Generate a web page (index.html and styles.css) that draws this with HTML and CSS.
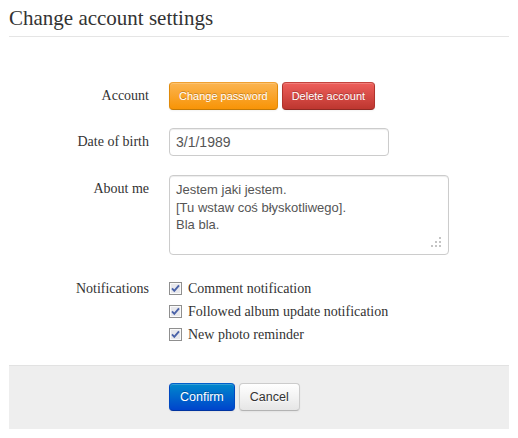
FILE: index.html
```html
<!DOCTYPE html>
<html>
<head>
<meta charset="utf-8">
<link rel="stylesheet" href="styles.css">
</head>
<body>
<div class="page">
  <h1 class="title">Change account settings</h1>
  <form class="form">
    <div class="row row-account">
      <div class="label">Account</div>
      <div class="controls btns">
        <button type="button" class="btn btn-sm btn-warning">Change password</button>
        <button type="button" class="btn btn-sm btn-danger">Delete account</button>
      </div>
    </div>
    <div class="row row-date">
      <div class="label">Date of birth</div>
      <div class="controls">
        <input class="input" type="text" value="3/1/1989">
      </div>
    </div>
    <div class="row row-about">
      <div class="label label-top">About me</div>
      <div class="controls">
        <div class="ta-wrap">
          <textarea class="textarea">Jestem jaki jestem.
[Tu wstaw coś błyskotliwego].
Bla bla.</textarea>
          <svg class="grip" width="12" height="12" viewBox="0 0 12 12">
            <rect x="9" y="1" width="2" height="2" fill="#c4c4c4"/>
            <rect x="5" y="5" width="2" height="2" fill="#c4c4c4"/>
            <rect x="9" y="5" width="2" height="2" fill="#c4c4c4"/>
            <rect x="1" y="9" width="2" height="2" fill="#c4c4c4"/>
            <rect x="5" y="9" width="2" height="2" fill="#c4c4c4"/>
            <rect x="9" y="9" width="2" height="2" fill="#c4c4c4"/>
          </svg>
        </div>
      </div>
    </div>
    <div class="row row-notif">
      <div class="label label-notif">Notifications</div>
      <div class="controls checks">
        <label class="check"><svg class="cb" width="13" height="13" viewBox="0 0 13 13"><rect x="0.5" y="0.5" width="12" height="12" fill="#f3f3f3" stroke="#8f8f8f"/><rect x="1.5" y="1.5" width="10" height="10" fill="#e8e8ec" stroke="#fafafa"/><path d="M3 6.3 L5.3 8.8 L10 3.3" fill="none" stroke="#4a62a8" stroke-width="1.9"/></svg>Comment notification</label>
        <label class="check"><svg class="cb" width="13" height="13" viewBox="0 0 13 13"><rect x="0.5" y="0.5" width="12" height="12" fill="#f3f3f3" stroke="#8f8f8f"/><rect x="1.5" y="1.5" width="10" height="10" fill="#e8e8ec" stroke="#fafafa"/><path d="M3 6.3 L5.3 8.8 L10 3.3" fill="none" stroke="#4a62a8" stroke-width="1.9"/></svg>Followed album update notification</label>
        <label class="check"><svg class="cb" width="13" height="13" viewBox="0 0 13 13"><rect x="0.5" y="0.5" width="12" height="12" fill="#f3f3f3" stroke="#8f8f8f"/><rect x="1.5" y="1.5" width="10" height="10" fill="#e8e8ec" stroke="#fafafa"/><path d="M3 6.3 L5.3 8.8 L10 3.3" fill="none" stroke="#4a62a8" stroke-width="1.9"/></svg>New photo reminder</label>
      </div>
    </div>
    <div class="actions">
      <button type="button" class="btn btn-md btn-primary">Confirm</button>
      <button type="button" class="btn btn-md btn-default">Cancel</button>
    </div>
  </form>
</div>
</body>
</html>
```

FILE: styles.css
```css
html, body {
  margin: 0;
  padding: 0;
  background: #ffffff;
}
.page {
  width: 500px;
  margin: 0 9px;
  font-family: "Liberation Serif", "Times New Roman", serif;
  color: #333333;
}
.title {
  margin: 0;
  font-size: 21px;
  line-height: 36px;
  font-weight: normal;
  color: #333333;
  border-bottom: 1px solid #e5e5e5;
}
.form {
  margin: 0;
  padding-top: 45px;
}
.row {
  display: flex;
  align-items: flex-start;
}
.row-account { margin-bottom: 18px; }
.row-date { margin-bottom: 19px; }
.row-about { margin-bottom: 22px; }
.row-notif { margin-bottom: 19px; }
.label {
  width: 140px;
  flex: none;
  text-align: right;
  font-size: 14px;
  line-height: 28px;
}
.label-top {
  line-height: 20px;
  padding-top: 4px;
}
.label-notif {
  line-height: 23px;
}
.controls {
  margin-left: 20px;
}
.btns {
  display: flex;
  gap: 4px;
}
.btn {
  box-sizing: border-box;
  height: 28px;
  margin: 0;
  border: 1px solid;
  border-radius: 4px;
  font-family: "Liberation Sans", Arial, sans-serif;
  cursor: pointer;
  box-shadow: inset 0 1px 0 rgba(255,255,255,0.2), 0 1px 2px rgba(0,0,0,0.05);
}
.btn-sm {
  font-size: 11px;
  padding: 0 9px;
}
.btn-md {
  font-size: 12.5px;
  padding: 0 10px;
}
.btn-warning {
  color: #ffffff;
  text-shadow: 0 -1px 0 rgba(0,0,0,0.25);
  background: linear-gradient(#fbb450, #f89406);
  border-color: #f0a030 #e08a0a #c27a08;
}
.btn-danger {
  color: #ffffff;
  text-shadow: 0 -1px 0 rgba(0,0,0,0.25);
  background: linear-gradient(#ee5f5b, #bd362f);
  border-color: #c4433d #b0332c #8e2a24;
}
.btn-primary {
  color: #ffffff;
  text-shadow: 0 -1px 0 rgba(0,0,0,0.25);
  background: linear-gradient(#0088cc, #0044cc);
  border-color: #0060cc #0048c0 #0033a0;
}
.btn-default {
  color: #333333;
  text-shadow: 0 1px 1px rgba(255,255,255,0.75);
  background: linear-gradient(#ffffff, #e6e6e6);
  border-color: #cccccc #cccccc #b3b3b3;
}
.input {
  box-sizing: border-box;
  width: 220px;
  height: 28px;
  margin: 0;
  padding: 3px 6px;
  border: 1px solid #cccccc;
  border-radius: 4px;
  font-family: "Liberation Sans", Arial, sans-serif;
  font-size: 14px;
  line-height: 20px;
  color: #555555;
  box-shadow: inset 0 1px 1px rgba(0,0,0,0.075);
  outline: none;
}
.ta-wrap {
  position: relative;
  width: 280px;
  height: 80px;
}
.textarea {
  display: block;
  box-sizing: border-box;
  width: 280px;
  height: 80px;
  margin: 0;
  padding: 5px 6px;
  border: 1px solid #cccccc;
  border-radius: 4px;
  font-family: "Liberation Sans", Arial, sans-serif;
  font-size: 13px;
  line-height: 17.5px;
  color: #555555;
  resize: none;
  overflow: hidden;
  box-shadow: inset 0 1px 1px rgba(0,0,0,0.075);
  outline: none;
}
.grip {
  position: absolute;
  right: 7px;
  bottom: 7px;
}
.checks {
  display: flex;
  flex-direction: column;
}
.check {
  display: flex;
  align-items: center;
  height: 23px;
  font-size: 14px;
  line-height: 23px;
  color: #333333;
}
.cb {
  flex: none;
  margin-right: 6px;
}
.actions {
  display: flex;
  gap: 4px;
  padding: 17px 0 18px 160px;
  background: #eeeeee;
  border-top: 1px solid #e2e2e2;
}
```
